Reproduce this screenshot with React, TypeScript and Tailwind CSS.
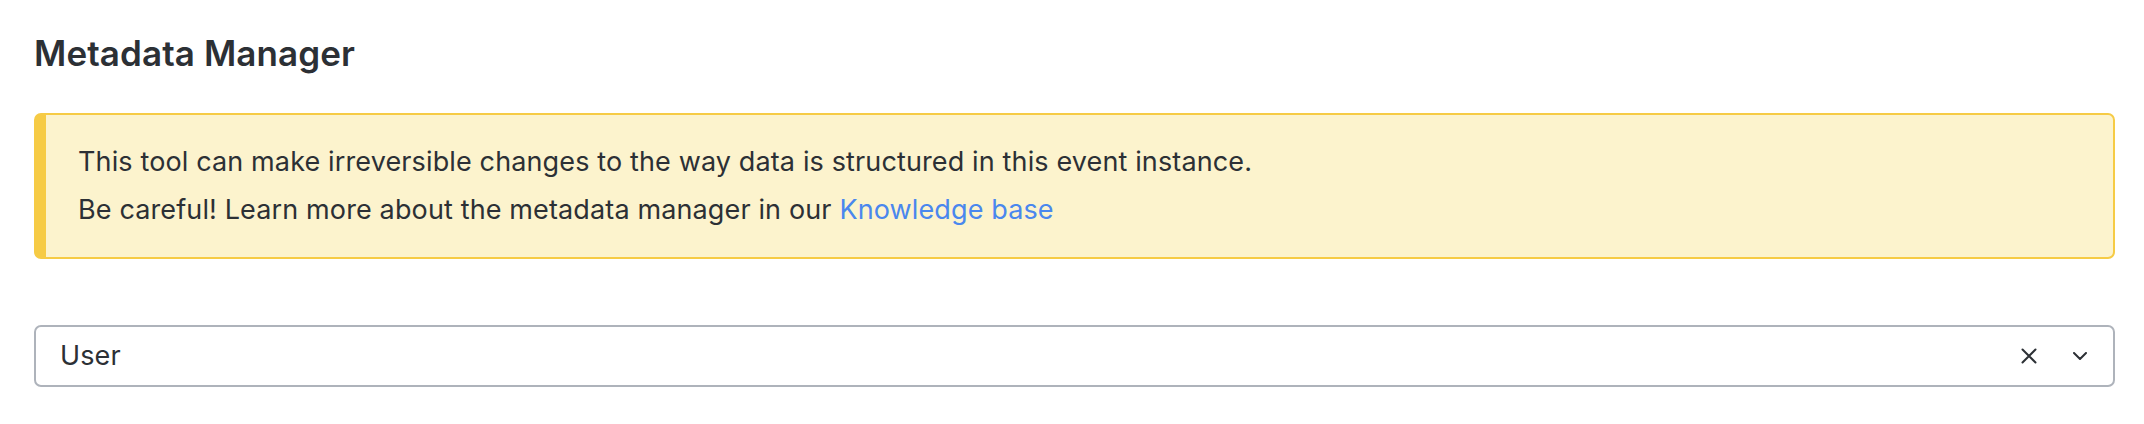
export default function App() {
  return (
    <div
      className="min-h-[424px] bg-white pl-[34px] pr-[29px] pt-[33px] text-[#2c3035]"
      style={{ fontFamily: "Inter, 'Noto Sans', sans-serif" }}
    >
      <h1 className="text-[35px] font-semibold leading-[40px] tracking-[0.1px]">Metadata Manager</h1>

      <div className="mt-[40px] rounded-[7px] border-2 border-l-[12px] border-[#f6cb45] bg-[#fcf3cd] py-[23px] pl-[32px] text-[27px] leading-[48px] tracking-[0.13px]">
        <p>This tool can make irreversible changes to the way data is structured in this event instance.</p>
        <p>
          Be careful! Learn more about the metadata manager in our{" "}
          <a href="#" className="text-[#4a87ee]">
            Knowledge base
          </a>
        </p>
      </div>

      <div className="mt-[66px] flex h-[62px] items-center rounded-[7px] border-2 border-[#aeb3bb] pl-[24px] pr-[26px]">
        <span className="flex-1 text-[27px] tracking-[0.13px]">User</span>
        <svg width="16" height="16" viewBox="0 0 16 16" className="mr-[36px]" fill="none" stroke="#2c3035" strokeWidth="2" strokeLinecap="round">
          <path d="M1.5 1.5 L14.5 14.5 M14.5 1.5 L1.5 14.5" />
        </svg>
        <svg width="14" height="8" viewBox="0 0 14 8" fill="none" stroke="#2c3035" strokeWidth="2" strokeLinecap="round" strokeLinejoin="round">
          <path d="M1 1 L7 7 L13 1" />
        </svg>
      </div>
    </div>
  );
}
